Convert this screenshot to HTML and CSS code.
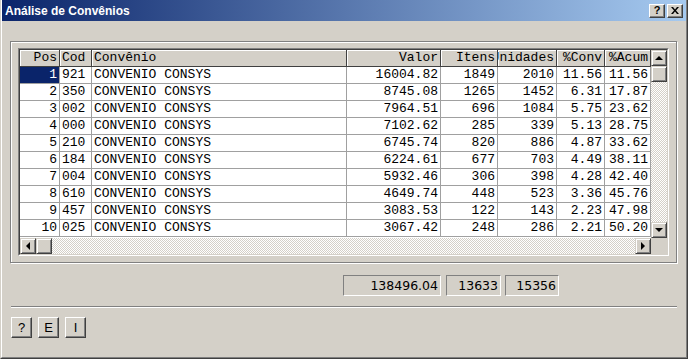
FILE: index.html
```html
<!DOCTYPE html>
<html lang="pt">
<head>
  <meta charset="UTF-8" />
  <title>Análise de Convênios</title>
  <link rel="stylesheet" href="styles.css">
</head>
<body>

<div class="window">
  <div class="frame">
    <div class="titlebar">
      <span class="title">Análise de Convênios</span>
      <div class="caption-buttons">
        <div class="cap-btn">?</div>
        <div class="cap-btn">
          <svg width="8" height="7" viewBox="0 0 8 7"><path d="M0 0h2l2 2.5 2-2.5h2l-3 3.5 3 3.5h-2l-2-2.5-2 2.5h-2l3-3.5z" fill="#000"/></svg>
        </div>
      </div>
    </div>

    <div class="panel">
      <div class="grid-frame">
        <div class="grid-client">
          <div class="cells" id="cells">
            <div class="cell head">Pos</div>
            <div class="cell head left">Cod</div>
            <div class="cell head left">Convênio</div>
            <div class="cell head">Valor</div>
            <div class="cell head">Itens</div>
            <div class="cell head clip">Unidades</div>
            <div class="cell head">%Conv</div>
            <div class="cell head">%Acum</div>
          </div>
          <div class="vscroll">
            <div class="sb-group">
              <div class="sb-btn"><span class="arrow up"></span></div>
              <div class="sb-btn"></div>
            </div>
            <div class="sb-btn"><span class="arrow down"></span></div>
          </div>
          <div class="hscroll">
            <div class="sb-group row">
              <div class="sb-btn"><span class="arrow left"></span></div>
              <div class="sb-btn"></div>
            </div>
            <div class="sb-btn"><span class="arrow right"></span></div>
          </div>
          <div class="corner"></div>
        </div>
      </div>
    </div>

    <div class="totals">
      <div class="total t-valor">138496.04</div>
      <div class="total t-itens">13633</div>
      <div class="total t-unid">15356</div>
    </div>

    <div class="separator"></div>

    <div class="actions">
      <button class="btn">?</button>
      <button class="btn">E</button>
      <button class="btn">I</button>
    </div>
  </div>
</div>

<script>
  const rows = [
    [1, '921', '16004.82', 1849, 2010, '11.56', '11.56'],
    [2, '350', '8745.08', 1265, 1452, '6.31', '17.87'],
    [3, '002', '7964.51', 696, 1084, '5.75', '23.62'],
    [4, '000', '7102.62', 285, 339, '5.13', '28.75'],
    [5, '210', '6745.74', 820, 886, '4.87', '33.62'],
    [6, '184', '6224.61', 677, 703, '4.49', '38.11'],
    [7, '004', '5932.46', 306, 398, '4.28', '42.40'],
    [8, '610', '4649.74', 448, 523, '3.36', '45.76'],
    [9, '457', '3083.53', 122, 143, '2.23', '47.98'],
    [10, '025', '3067.42', 248, 286, '2.21', '50.20']
  ];

  const cells = document.getElementById('cells');
  let html = '';
  rows.forEach((r, i) => {
    html += `<div class="cell${i === 0 ? ' selected' : ''}">${r[0]}</div>`;
    html += `<div class="cell left">${r[1]}</div>`;
    html += `<div class="cell left">CONVENIO CONSYS</div>`;
    html += `<div class="cell">${r[2]}</div>`;
    html += `<div class="cell">${r[3]}</div>`;
    html += `<div class="cell">${r[4]}</div>`;
    html += `<div class="cell">${r[5]}</div>`;
    html += `<div class="cell">${r[6]}</div>`;
  });
  cells.innerHTML += html;
</script>

</body>
</html>
```

FILE: styles.css
```css
* {
  box-sizing: border-box;
}
body {
  margin: 0;
  background: #d4d0c8;
  font-family: "Liberation Sans", Arial, sans-serif;
  font-size: 12px;
  color: #000;
}
.window {
  width: 688px;
  height: 359px;
  border-left: 1px solid #d4d0c8;
  border-right: 1px solid #404040;
  border-bottom: 1px solid #404040;
}
.frame {
  height: 100%;
  border-left: 1px solid #fff;
  border-right: 1px solid #808080;
  border-bottom: 1px solid #808080;
  display: flex;
  flex-direction: column;
}
.titlebar {
  height: 21px;
  flex: none;
  background: linear-gradient(to right, #0a246a, #a6caf0);
  display: flex;
  align-items: center;
  justify-content: space-between;
  padding: 0 3px;
}
.title {
  color: #fff;
  font-weight: bold;
  font-size: 12px;
}
.caption-buttons {
  display: flex;
  gap: 2px;
}
.cap-btn {
  width: 16px;
  height: 14px;
  background: #d4d0c8;
  border: 1px solid;
  border-color: #fff #404040 #404040 #fff;
  box-shadow: inset -1px -1px 0 #808080;
  display: flex;
  align-items: center;
  justify-content: center;
  font-weight: bold;
  font-size: 11px;
  line-height: 1;
}

/* painel com a grade */
.panel {
  margin: 20px 0 0 8px;
  width: 667px;
  height: 222px;
  flex: none;
  border: 1px solid #808080;
  box-shadow: inset 1px 1px 0 #fff, 1px 1px 0 #fff;
  padding: 6px 7px;
}
.grid-frame {
  width: 651px;
  height: 208px;
  border: 1px solid;
  border-color: #808080 #fff #fff #808080;
}
.grid-client {
  height: 100%;
  border: 1px solid;
  border-color: #404040 #d4d0c8 #d4d0c8 #404040;
  background: #fff;
  display: grid;
  grid-template-columns: 631px 16px;
  grid-template-rows: 188px 16px;
}
.cells {
  display: grid;
  grid-template-columns: 40px 32px 255px 94px 57px 59px 48px 46px;
  grid-auto-rows: 17px;
  align-content: start;
  overflow: hidden;
  font-family: "Liberation Mono", "Courier New", monospace;
  font-size: 13px;
}
.cell {
  border-right: 1px solid #a0a0a0;
  border-bottom: 1px solid #a0a0a0;
  padding: 0 2px;
  line-height: 16px;
  text-align: right;
  white-space: nowrap;
  overflow: hidden;
}
.cell.left {
  text-align: left;
}
.cell.head {
  background: #d4d0c8;
  border-color: #404040;
  box-shadow: inset 1px 1px 0 #fff;
}
.cell.clip {
  display: flex;
  justify-content: flex-end;
}
.cell.selected {
  background: #0a246a;
  color: #fff;
}

/* barras de rolagem */
.vscroll, .hscroll {
  background: repeating-conic-gradient(#fff 0 25%, #d4d0c8 0 50%) 0 0 / 2px 2px;
  display: flex;
  justify-content: space-between;
}
.vscroll {
  flex-direction: column;
}
.sb-group {
  display: flex;
  flex-direction: column;
}
.sb-group.row {
  flex-direction: row;
}
.sb-btn {
  width: 16px;
  height: 16px;
  background: #d4d0c8;
  border: 1px solid;
  border-color: #d4d0c8 #404040 #404040 #d4d0c8;
  box-shadow: inset 1px 1px 0 #fff, inset -1px -1px 0 #808080;
  display: flex;
  align-items: center;
  justify-content: center;
}
.arrow {
  width: 0;
  height: 0;
  border: 4px solid transparent;
}
.arrow.up {
  border-top-width: 0;
  border-bottom-color: #000;
}
.arrow.down {
  border-bottom-width: 0;
  border-top-color: #000;
}
.arrow.left {
  border-left-width: 0;
  border-right-color: #000;
}
.arrow.right {
  border-right-width: 0;
  border-left-color: #000;
}
.corner {
  background: #d4d0c8;
}

/* totais */
.totals {
  display: flex;
  margin: 12px 0 0 341px;
  flex: none;
}
.total {
  height: 21px;
  border: 1px solid;
  border-color: #808080 #fff #fff #808080;
  text-align: right;
  padding-right: 2px;
  line-height: 19px;
  font-family: "DejaVu Sans", Verdana, sans-serif;
  font-size: 12.5px;
}
.t-valor { width: 98px; }
.t-itens { width: 55px; margin-left: 5px; }
.t-unid { width: 54px; margin-left: 4px; }

.separator {
  margin: 10px 0 0 9px;
  width: 666px;
  height: 2px;
  flex: none;
  border-top: 1px solid #808080;
  border-bottom: 1px solid #fff;
}
.actions {
  display: flex;
  gap: 6px;
  margin: 9px 0 0 9px;
}
.btn {
  width: 21px;
  height: 21px;
  padding: 0;
  background: #d4d0c8;
  border: 1px solid;
  border-color: #fff #404040 #404040 #fff;
  box-shadow: inset -1px -1px 0 #808080;
  font-family: "Liberation Sans", Arial, sans-serif;
  font-size: 13px;
  color: #000;
}
```
